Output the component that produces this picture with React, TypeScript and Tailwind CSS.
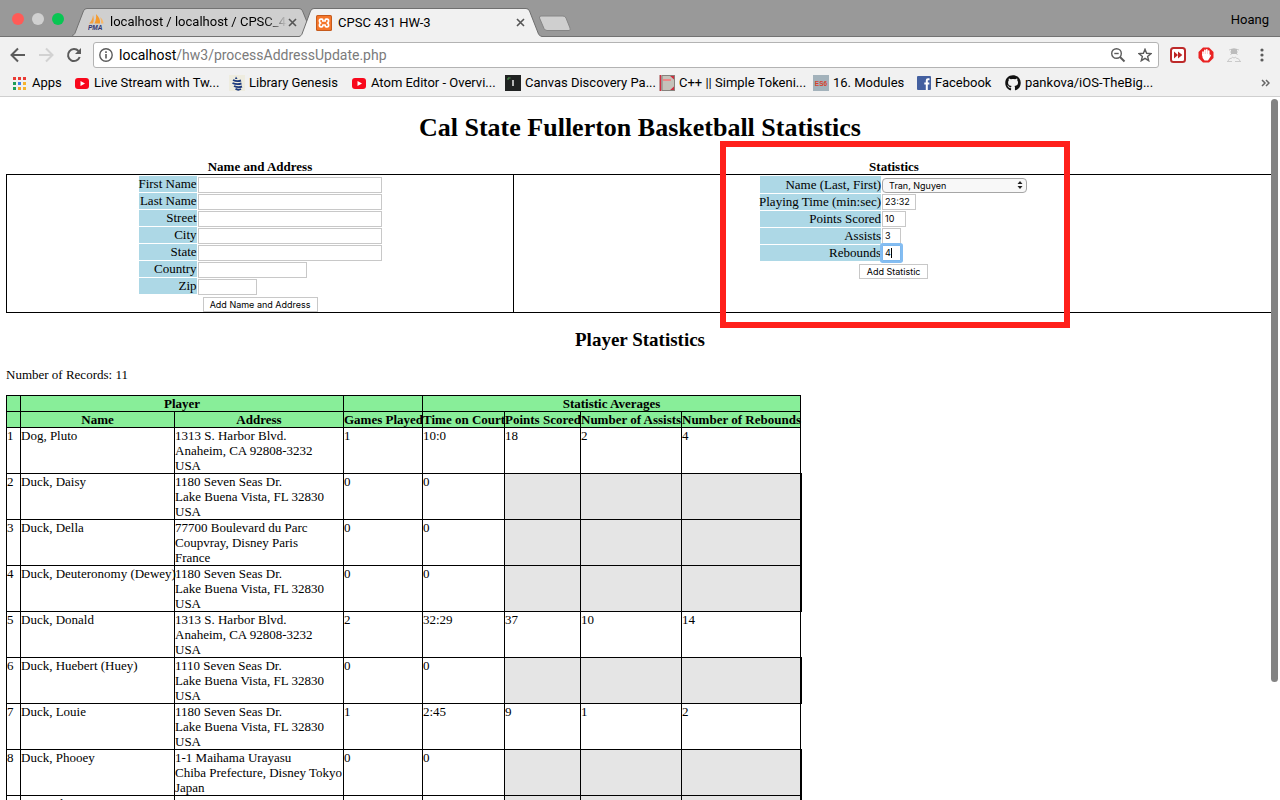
import type { ReactNode } from "react";
import { FaGithub } from "react-icons/fa";

const RED_TEXT = "#d6402b";

function TabShape({ fill }: { fill: string }) {
  return (
    <svg className="absolute inset-0 h-full w-full" viewBox="0 0 243 29" preserveAspectRatio="none" aria-hidden="true">
      <path d="M0 28.5 C2 28 2.5 27 3 26 L11.5 3 Q12.5 0.5 15 0.5 L227 0.5 Q229.5 0.5 230.5 3 L239.5 26 C240 27 241 28 243 28.5 L243 29 L0 29 Z" fill={fill} />
      <path d="M0 28.5 C2 28 2.5 27 3 26 L11.5 3 Q12.5 0.5 15 0.5 L227 0.5 Q229.5 0.5 230.5 3 L239.5 26 C240 27 241 28 243 28.5" fill="none" stroke="#6f6f6f" />
    </svg>
  );
}

function CloseIcon() {
  return (
    <svg width="9" height="9" viewBox="0 0 9 9" aria-hidden="true">
      <path d="M1 1 L8 8 M8 1 L1 8" stroke="#555" strokeWidth="1.6" />
    </svg>
  );
}

function PmaIcon() {
  return (
    <svg width="16" height="16" viewBox="0 0 16 16" aria-hidden="true">
      <path d="M5 1 C6 4 6 7 5 9.5 L1 9.5 C3 7.500 4.800 5 5 1Z" fill="#f5a040" />
      <path d="M8 0 C11 3 12.500 6 12 9.500 L6.500 9.500 C8 6 8.500 3 8 0Z" fill="#f59a2c" />
      <path d="M12 3 C14.500 5 15.500 7.500 15.500 9.500 L13 9.500 C13.200 7 13 5 12 3Z" fill="#f8b768" />
      <text x="0" y="15.500" fontFamily="Liberation Sans, sans-serif" fontSize="6.500" fontWeight="bold" fontStyle="italic" fill="#2f3370">PMA</text>
    </svg>
  );
}

function XamppIcon() {
  return (
    <svg width="16" height="16" viewBox="0 0 16 16" aria-hidden="true">
      <rect width="16" height="16" rx="1.5" fill="#c65a1c" />
      <rect x="1" y="1" width="14" height="14" rx="1" fill="#f5762a" />
      <path d="M4.800 4.200 H6 Q6.800 4.200 6.800 5.500 V6 H9.200 V5.500 Q9.200 4.200 10 4.200 H11.200 Q12.600 4.200 12.600 6 Q12.600 7.500 11.300 8 Q12.600 8.500 12.600 10 Q12.600 11.800 11.200 11.800 H10 Q9.200 11.800 9.200 10.500 V10 H6.800 V10.500 Q6.800 11.800 6 11.800 H4.800 Q3.400 11.800 3.400 10 Q3.400 8.500 4.700 8 Q3.400 7.500 3.400 6 Q3.400 4.200 4.800 4.200Z" fill="none" stroke="#fff" strokeWidth="1.700" strokeLinejoin="round" />
    </svg>
  );
}

function AppsIcon() {
  const colors = ["#ea3b34", "#ea3b34", "#ea3b34", "#1f9d58", "#3f7fe8", "#f6b32d", "#1f9d58", "#f6a32d", "#f6b32d"];
  return (
    <svg width="16" height="14" viewBox="0 0 16 14" aria-hidden="true">
      {colors.map((c, i) => (
        <rect key={i} x={1 + (i % 3) * 5} y={1 + Math.floor(i / 3) * 5} width="3" height="3" fill={c} />
      ))}
    </svg>
  );
}

function YoutubeIcon() {
  return (
    <svg width="15" height="16" viewBox="0 0 15 16" aria-hidden="true">
      <rect y="3" width="14" height="11" rx="3" fill="#f8081c" />
      <path d="M5.500 6 L10 8.500 L5.500 11Z" fill="#fff" />
    </svg>
  );
}

function GenesisIcon() {
  return (
    <svg width="16" height="16" viewBox="0 0 16 16" aria-hidden="true">
      <rect width="16" height="16" fill="#eeecdf" />
      <path d="M7 1.500 L8.500 4 H6Z" fill="#1d3a7c" />
      <path d="M4 5 Q8 7 12 5.500 M3.500 8 Q8 10 12.500 8.500 M5 11 Q9 13 13 11.500 M6.500 13.800 Q9 15.500 12 14" fill="none" stroke="#1d3a7c" strokeWidth="1.900" />
    </svg>
  );
}

function CanvasIcon() {
  return (
    <svg width="16" height="16" viewBox="0 0 16 16" aria-hidden="true">
      <rect width="16" height="16" fill="#202222" />
      <path d="M3 5 V3 H5.500" fill="none" stroke="#4d9a50" />
      <path d="M8 5 V11" stroke="#ddd" strokeWidth="1.600" />
    </svg>
  );
}

function BookIcon() {
  return (
    <svg width="16" height="16" viewBox="0 0 16 16" aria-hidden="true">
      <rect width="16" height="16" fill="#c5c2ba" />
      <path d="M1.500 0 V16" stroke="#d12c40" strokeWidth="1.500" />
      <path d="M4 4 H12 V6 H4Z" fill="#ee8787" />
      <path d="M10 0 H15.500 V5Z M10 16 H15.500 V11Z" fill="#cf2f40" />
      <path d="M3 .5 H15.500 V15.500 H3Z" fill="none" stroke="#85827d" />
    </svg>
  );
}

function Es6Icon() {
  return (
    <svg width="16" height="16" viewBox="0 0 16 16" aria-hidden="true">
      <rect width="16" height="16" fill="#a3b2bb" />
      <text x="8" y="11" textAnchor="middle" fontFamily="Liberation Sans, sans-serif" fontSize="6.500" fontWeight="bold" fill={RED_TEXT}>ES6</text>
    </svg>
  );
}

function FacebookIcon() {
  return (
    <svg width="14" height="14" viewBox="0 0 14 14" aria-hidden="true">
      <rect width="14" height="14" rx="1" fill="#4460a0" />
      <path d="M12.500 3.300 H11 Q9.800 3.300 9.800 4.500 V14 M7.300 7.600 H12.300" fill="none" stroke="#fff" strokeWidth="2" />
    </svg>
  );
}

function Bookmark({ icon, text, size }: { icon: ReactNode; text: string; size: string }) {
  return (
    <a href="#" className={`flex shrink-0 items-center gap-1 whitespace-nowrap ${size}`}>
      {icon}
      {text}
    </a>
  );
}

function Browser({ children }: { children: ReactNode }) {
  return (
    <div className="flex h-screen flex-col overflow-hidden bg-white text-black">
      <header className="shrink-0 bg-[#f1f1f1] font-['Roboto',sans-serif] text-[13px]">
        <div className="flex h-[37px] items-end border-b border-[#727272] bg-[#999]">
          <div className="flex h-full w-[72px] items-center gap-2 pt-[2px] pl-3">
            <button aria-label="Close window" className="size-3 rounded-full bg-[#ff5b57]" />
            <button aria-label="Minimize window" className="size-3 rounded-full bg-[#d0d0d0]" />
            <button aria-label="Zoom window" className="size-3 rounded-full bg-[#08c653]" />
          </div>
          <div className="relative flex h-7 w-[243px] items-center pr-[18px] pl-4">
            <TabShape fill="#cfcfcf" />
            <span className="relative shrink-0"><PmaIcon /></span>
            <span className="relative ml-[6px] min-w-0 flex-1 overflow-hidden bg-linear-to-r from-black from-85% to-[#cfcfcf] bg-clip-text whitespace-nowrap text-transparent">
              localhost / localhost / CPSC_431
            </span>
            <button aria-label="Close tab" className="relative ml-px"><CloseIcon /></button>
          </div>
          <div className="relative -mb-px -ml-4 flex h-[29px] w-[243px] items-center pr-[17px] pl-[17px]">
            <TabShape fill="#f1f1f1" />
            <span className="relative shrink-0"><XamppIcon /></span>
            <span className="relative ml-[6px] flex-1 whitespace-nowrap">CPSC 431 HW-3</span>
            <button aria-label="Close tab" className="relative"><CloseIcon /></button>
          </div>
          <button aria-label="New tab" className="-ml-1 self-center pt-[10px]">
            <svg width="34" height="17" viewBox="0 0 34 17" aria-hidden="true">
              <path d="M3 1 H25 Q27 1 28 3 L32 13 Q33 15.500 31 15.500 H9 Q7 15.500 6 13.500 L1.500 3 Q1 1 3 1Z" fill="#cfcfcf" stroke="#858585" />
            </svg>
          </button>
          <span className="ml-auto self-center pt-1 pr-[11px]">Hoang</span>
        </div>
        <div className="flex h-9 items-center pr-[10px]">
          <div className="flex w-[93px] items-center gap-3 pl-[10px]">
            <button aria-label="Back">
              <svg width="16" height="16" viewBox="0 0 16 16" fill="none" stroke="#5b5b5b" strokeWidth="2" aria-hidden="true"><path d="M15 8 H2 M8 1.500 L1.500 8 L8 14.500" /></svg>
            </button>
            <button aria-label="Forward">
              <svg width="16" height="16" viewBox="0 0 16 16" fill="none" stroke="#d2d2d2" strokeWidth="2" aria-hidden="true"><path d="M1 8 H14 M8 1.500 L14.500 8 L8 14.500" /></svg>
            </button>
            <button aria-label="Reload">
              <svg width="16" height="16" viewBox="0 0 16 16" aria-hidden="true">
                <path d="M13.700 10 A6 6 0 1 1 12.500 4" fill="none" stroke="#5b5b5b" strokeWidth="2" />
                <path d="M15 1 V7 H9Z" fill="#5b5b5b" />
              </svg>
            </button>
          </div>
          <div className="flex h-[26px] flex-1 items-center rounded-[3px] border border-[#b3b3b3] bg-white pr-[6px] pl-[5px]">
            <svg width="14" height="14" viewBox="0 0 14 14" fill="none" stroke="#5b5b5b" strokeWidth="1.400" aria-hidden="true">
              <circle cx="7" cy="7" r="6.200" />
              <path d="M7 6 V10.500 M7 3.300 V4.900" strokeWidth="1.600" />
            </svg>
            <span className="ml-[6px] flex-1 text-[14px] text-[#7b7b7b]"><span className="text-black">localhost</span>/hw3/processAddressUpdate.php</span>
            <button aria-label="Zoom out">
              <svg width="16" height="16" viewBox="0 0 16 16" fill="none" stroke="#5b5b5b" strokeWidth="1.400" aria-hidden="true">
                <circle cx="6.500" cy="6.500" r="4.800" /><path d="M4.300 6.500 H8.700" /><path d="M10 10 L14.500 14.500" strokeWidth="2" />
              </svg>
            </button>
            <button aria-label="Bookmark this page" className="ml-3">
              <svg width="14" height="14" viewBox="0 0 14 14" fill="none" stroke="#5b5b5b" strokeWidth="1.400" aria-hidden="true">
                <path d="M7 1.300 L8.600 5.300 L13 5.600 L9.600 8.400 L10.700 12.700 L7 10.300 L3.300 12.700 L4.400 8.400 L1 5.600 L5.400 5.300Z" />
              </svg>
            </button>
          </div>
          <div className="flex items-center gap-3 pl-[11px]">
            <button aria-label="Fast forward extension">
              <svg width="16" height="16" viewBox="0 0 16 16" aria-hidden="true">
                <rect x="1" y="1" width="14" height="14" rx="2.500" fill="#fff" stroke="#bd2a2a" strokeWidth="2" />
                <path d="M4 4.500 L8 8 L4 11.500Z M8 4.500 L12.300 8 L8 11.500Z" fill="#bd2424" />
              </svg>
            </button>
            <button aria-label="Ad blocker">
              <svg width="16" height="16" viewBox="0 0 16 16" aria-hidden="true">
                <path d="M5 .5 H11 L15.500 5 V11 L11 15.500 H5 L.5 11 V5Z" fill="#e92222" />
                <path d="M5 8 V5 M6.900 8 V3.300 M8.800 8 V2.800 M10.700 8 V4" stroke="#fff" strokeWidth="1.700" strokeLinecap="round" />
                <path d="M4.200 7 H11.500 V8.500 L13 7.500 Q13.500 8 12.500 9.500 L10 13.500 H6.500 Q4.200 12 4.200 8Z" fill="#fff" />
              </svg>
            </button>
            <button aria-label="Incognito extension">
              <svg width="16" height="16" viewBox="0 0 16 16" fill="none" stroke="#cacaca" aria-hidden="true">
                <path d="M3 3 Q8 0 13 3 M4 5 H12 M4.500 8 L6 6 H10 L11.500 8 M6 10 Q8 12 10 10 M2 14 Q3 11 6 11 M10 11 Q13 11 14 14 M1 14.500 H6 M9 14.500 H15" />
                <path d="M5 2 H11 V7 H5Z" fill="#bcbcbc" stroke="none" />
              </svg>
            </button>
            <button aria-label="Menu">
              <svg width="16" height="16" viewBox="0 0 16 16" fill="#5b5b5b" aria-hidden="true"><circle cx="8" cy="3" r="1.600" /><circle cx="8" cy="8" r="1.600" /><circle cx="8" cy="13" r="1.600" /></svg>
            </button>
          </div>
        </div>
        <nav aria-label="Bookmarks" className="flex h-6 items-start border-b border-[#cfcfcf] pr-[10px] pl-3 leading-5">
          <Bookmark icon={<AppsIcon />} text="Apps" size="w-[63px]" />
          <Bookmark icon={<YoutubeIcon />} text="Live Stream with Tw..." size="w-[154px]" />
          <Bookmark icon={<GenesisIcon />} text="Library Genesis" size="w-[123px]" />
          <Bookmark icon={<YoutubeIcon />} text="Atom Editor - Overvi..." size="w-[153px]" />
          <Bookmark icon={<CanvasIcon />} text="Canvas Discovery Pa..." size="w-[154px]" />
          <Bookmark icon={<BookIcon />} text="C++ || Simple Tokeni..." size="w-[154px]" />
          <Bookmark icon={<Es6Icon />} text="16. Modules" size="w-[104px]" />
          <Bookmark icon={<FacebookIcon />} text="Facebook" size="w-[88px]" />
          <Bookmark icon={<FaGithub size={16} color="#111" />} text="pankova/iOS-TheBig..." size="w-[154px]" />
          <button aria-label="More bookmarks" className="ml-auto flex h-5 items-center">
            <svg width="9" height="8" viewBox="0 0 9 8" fill="none" stroke="#666" strokeWidth="1.500" aria-hidden="true"><path d="M1 1 L4 4 L1 7 M5 1 L8 4 L5 7" /></svg>
          </button>
        </nav>
      </header>
      <div className="relative min-h-0 flex-1 overflow-hidden">
        {children}
        <div aria-hidden="true" className="absolute top-[2px] right-[2px] h-[83%] w-[7px] rounded-full bg-[#838383]" />
      </div>
    </div>
  );
}

const inputClass = "block h-4 border border-[#c8c8c8] bg-white px-[2px] pb-[2px] font-['Inter',sans-serif] text-[9px] outline-none";
const labelClass = "flex items-center justify-end bg-[#add8e6] leading-4 whitespace-nowrap";
const buttonClass = "h-[15px] justify-self-center border border-[#c8c8c8] bg-white text-center font-['Inter',sans-serif] text-[9px] leading-3 whitespace-nowrap";

const addressFields = [
  { id: "first", label: "First Name", width: "w-[184px]" },
  { id: "last", label: "Last Name", width: "w-[184px]" },
  { id: "street", label: "Street", width: "w-[184px]" },
  { id: "city", label: "City", width: "w-[184px]" },
  { id: "state", label: "State", width: "w-[184px]" },
  { id: "country", label: "Country", width: "w-[109px]" },
  { id: "zip", label: "Zip", width: "w-[59px]" },
];

const statFields = [
  { id: "time", label: "Playing Time (min:sec)", value: "23:32", width: "w-[34px]" },
  { id: "points", label: "Points Scored", value: "10", width: "w-6" },
  { id: "assists", label: "Assists", value: "3", width: "w-[19px]" },
];

function AddressForm() {
  return (
    <form className="grid grid-cols-[58px_184px] gap-x-px pt-px">
      {addressFields.map((f) => (
        <div key={f.id} className="contents">
          <label htmlFor={f.id} className={`${labelClass} mb-px`}>{f.label}</label>
          <input id={f.id} type="text" className={`${inputClass} ${f.width} mt-px`} />
        </div>
      ))}
      <button type="button" className={`${buttonClass} col-span-2 mt-[2px] w-[115px]`}>Add Name and Address</button>
    </form>
  );
}

function StatisticsForm() {
  return (
    <form className="relative grid grid-cols-[121px_145px] gap-x-px pt-px">
      <label htmlFor="player" className={labelClass}>Name (Last, First)</label>
      <div className="relative pt-[2px]">
        <select id="player" defaultValue="tran" className="block h-[15px] w-full appearance-none rounded-[4px] border border-[#a6a6a6] bg-[#f8f8f8] pl-[6px] font-['Inter',sans-serif] text-[9px] leading-3">
          <option value="tran">Tran, Nguyen</option>
        </select>
        <svg className="pointer-events-none absolute top-[5px] right-1" width="6" height="8" viewBox="0 0 6 8" aria-hidden="true"><path d="M3 0 L5.500 3 H.5Z M3 8 L5.500 5 H.5Z" fill="#222" /></svg>
      </div>
      {statFields.map((f) => (
        <div key={f.id} className="contents">
          <label htmlFor={f.id} className={`${labelClass} mt-px`}>{f.label}</label>
          <input id={f.id} type="text" defaultValue={f.value} className={`${inputClass} ${f.width} mt-px`} />
        </div>
      ))}
      <label htmlFor="rebounds" className={`${labelClass} mt-px`}>Rebounds</label>
      <div className="relative mt-px w-[19px]">
        <input id="rebounds" type="text" defaultValue="4" className={`${inputClass} w-[19px] rounded-[1px] border-[#7db8ee]! ring-2 ring-[#84bdf2]`} />
        <span aria-hidden="true" className="absolute top-[3px] left-[9px] h-[10px] w-px bg-black" />
      </div>
      <button type="button" className={`${buttonClass} col-span-2 mt-[3px] w-[69px]`}>Add Statistic</button>
      <div aria-hidden="true" className="pointer-events-none absolute -top-[34px] -left-10 h-[187px] w-[350px] border-6 border-[#ff201b]" />
    </form>
  );
}

type Player = { name: string; address: string[]; games: number; time: string; stats?: number[] };

const players: Player[] = [
  { name: "Dog, Pluto", address: ["1313 S. Harbor Blvd.", "Anaheim, CA 92808-3232", "USA"], games: 1, time: "10:0", stats: [18, 2, 4] },
  { name: "Duck, Daisy", address: ["1180 Seven Seas Dr.", "Lake Buena Vista, FL 32830", "USA"], games: 0, time: "0" },
  { name: "Duck, Della", address: ["77700 Boulevard du Parc", "Coupvray, Disney Paris", "France"], games: 0, time: "0" },
  { name: "Duck, Deuteronomy (Dewey)", address: ["1180 Seven Seas Dr.", "Lake Buena Vista, FL 32830", "USA"], games: 0, time: "0" },
  { name: "Duck, Donald", address: ["1313 S. Harbor Blvd.", "Anaheim, CA 92808-3232", "USA"], games: 2, time: "32:29", stats: [37, 10, 14] },
  { name: "Duck, Huebert (Huey)", address: ["1110 Seven Seas Dr.", "Lake Buena Vista, FL 32830", "USA"], games: 0, time: "0" },
  { name: "Duck, Louie", address: ["1180 Seven Seas Dr.", "Lake Buena Vista, FL 32830", "USA"], games: 1, time: "2:45", stats: [9, 1, 2] },
  { name: "Duck, Phooey", address: ["1-1 Maihama Urayasu", "Chiba Prefecture, Disney Tokyo", "Japan"], games: 0, time: "0" },
  { name: "McDuck, Scrooge", address: ["1180 Seven Seas Dr.", "Lake Buena Vista, FL 32830", "USA"], games: 0, time: "0" },
];

const cell = "border border-black p-0 align-top";
const head = "border border-black p-0";

function StatisticsTable() {
  return (
    <table className="mt-[13px] w-[795px] table-fixed border-collapse text-left leading-[15px] whitespace-nowrap">
      <colgroup>
        <col className="w-[14px]" />
        <col className="w-[154px]" />
        <col className="w-[169px]" />
        <col className="w-[79px]" />
        <col className="w-[82px]" />
        <col className="w-[76px]" />
        <col className="w-[101px]" />
        <col className="w-[119px]" />
      </colgroup>
      <thead className="bg-[#88ee99] text-center">
        <tr className="h-4">
          <td className={head} />
          <th className={head} colSpan={2}>Player</th>
          <td className={head} />
          <th className={head} colSpan={4}>Statistic Averages</th>
        </tr>
        <tr className="h-4">
          <td className={head} />
          <th className={head}>Name</th>
          <th className={head}>Address</th>
          <th className={head}>Games Played</th>
          <th className={head}>Time on Court</th>
          <th className={head}>Points Scored</th>
          <th className={head}>Number of Assists</th>
          <th className={head}>Number of Rebounds</th>
        </tr>
      </thead>
      <tbody>
        {players.map((p, i) => (
          <tr key={p.name}>
            <td className={cell}>{i + 1}</td>
            <td className={cell}>{p.name}</td>
            <td className={cell}>
              {p.address.map((line) => (
                <div key={line}>{line}</div>
              ))}
            </td>
            <td className={cell}>{p.games}</td>
            <td className={cell}>{p.time}</td>
            {p.stats ? (
              p.stats.map((s, j) => <td key={j} className={cell}>{s}</td>)
            ) : (
              <>
                <td className="border border-black bg-[#e5e5e5]" />
                <td className="border border-black bg-[#e5e5e5]" />
                <td className="border border-r-2 border-black bg-[#e5e5e5]" />
              </>
            )}
          </tr>
        ))}
      </tbody>
    </table>
  );
}

export default function App() {
  return (
    <Browser>
      <main className="px-[6px] pt-4 font-['Liberation_Serif',serif] text-[13px] leading-[15px]">
        <h1 className="text-center text-[26px] leading-[30px] font-bold">Cal State Fullerton Basketball Statistics</h1>
        <div className="mt-4 grid grid-cols-[508fr_760fr] text-center font-bold">
          <h2>Name and Address</h2>
          <h2>Statistics</h2>
        </div>
        <div className="grid grid-cols-[508fr_760fr] items-stretch border border-black">
          <section className="flex items-start justify-center border-r border-black">
            <AddressForm />
          </section>
          <section className="flex items-start justify-center">
            <StatisticsForm />
          </section>
        </div>
        <h2 className="mt-4 text-center text-[19px] leading-[22px] font-bold">Player Statistics</h2>
        <p className="mt-4">Number of Records: 11</p>
        <StatisticsTable />
      </main>
    </Browser>
  );
}
